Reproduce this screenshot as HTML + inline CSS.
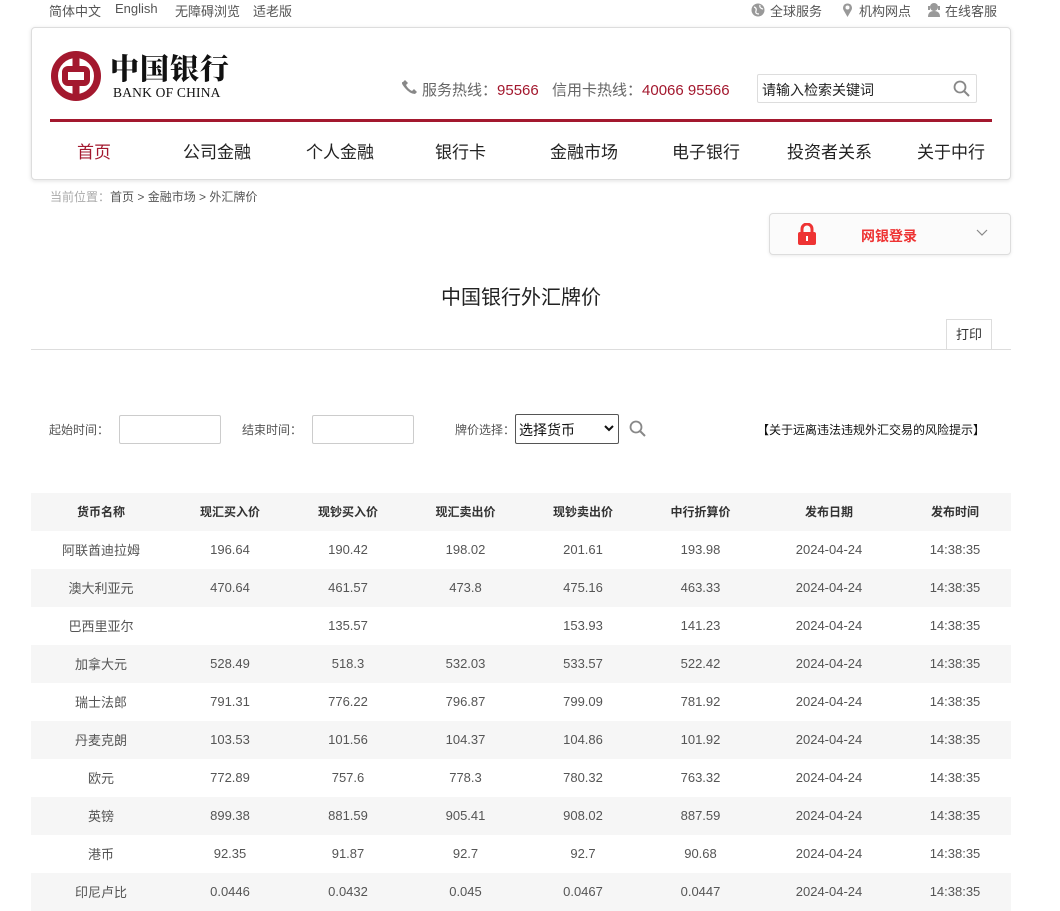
<!DOCTYPE html>
<html><head><meta charset="utf-8">
<style>
*{margin:0;padding:0;box-sizing:border-box}
body{width:1060px;height:904px;overflow:hidden;background:#fff;font-family:"Liberation Sans","Noto Sans CJK SC",sans-serif;color:#333;position:relative}
.a{position:absolute;white-space:nowrap}
.top{font-size:13px;color:#555;top:1px}
.hdr{position:absolute;left:31px;top:27px;width:980px;height:153px;border:1px solid #ddd;border-radius:4px;box-shadow:0 1px 4px rgba(0,0,0,.12);background:#fff}
.nav{font-size:17px;color:#222;top:138px}
table{position:absolute;left:31px;top:493px;width:980px;border-collapse:collapse;font-size:13px;color:#555}
td,th{height:38px;text-align:center;padding:0 0 2px 0}
th{font-weight:bold;color:#333;background:#f6f6f6;font-size:12px}
tr:nth-child(odd) td{background:#f6f6f6}
input.box{position:absolute;height:29px;border:1px solid #ccc;border-radius:2px;width:102px;top:415px}
.lbl{font-size:12px;color:#555;top:421px}
</style></head><body>
<div class="a top" style="left:49px">简体中文</div>
<div class="a top" style="left:115px">English</div>
<div class="a top" style="left:175px">无障碍浏览</div>
<div class="a top" style="left:253px">适老版</div>
<svg class="a" style="left:751px;top:3px" width="14" height="14" viewBox="0 0 14 14"><circle cx="7" cy="7" r="6.5" fill="#999"/><path d="M3 4q3 1 2 4t3 3M9 2q-1 3 3 4" stroke="#fff" stroke-width="1.2" fill="none"/></svg>
<div class="a top" style="left:770px">全球服务</div>
<svg class="a" style="left:842px;top:2px" width="11" height="16" viewBox="0 0 11 16"><path d="M5.5 15L1.5 8A4.5 4.5 0 1 1 9.5 8Z" fill="#999"/><circle cx="5.5" cy="5.5" r="2" fill="#fff"/></svg>
<div class="a top" style="left:859px">机构网点</div>
<svg class="a" style="left:927px;top:2px" width="14" height="16" viewBox="0 0 14 16"><circle cx="7" cy="5" r="4" fill="#999"/><path d="M1 15q0-6 6-6t6 6z" fill="#999"/><rect x="1" y="4" width="2" height="4" fill="#999"/><rect x="11" y="4" width="2" height="4" fill="#999"/></svg>
<div class="a top" style="left:945px">在线客服</div>

<div class="hdr"></div>
<svg class="a" style="left:50px;top:50px" width="52" height="52" viewBox="0 0 52 52"><circle cx="26" cy="26" r="21.5" fill="none" stroke="#a3182e" stroke-width="7"/><rect x="22.5" y="3" width="7" height="46" fill="#a3182e"/><rect x="15" y="19" width="22" height="14" rx="3" fill="none" stroke="#a3182e" stroke-width="6"/><rect x="22.5" y="22" width="7" height="8" fill="#fff"/></svg>
<div class="a" style="left:110px;top:47px;font-family:'Noto Serif CJK SC',serif;font-weight:900;font-size:29px;color:#111;letter-spacing:1px">中国银行</div>
<div class="a" style="left:113px;top:85px;font-family:'Liberation Serif',serif;font-size:13.5px;color:#111;letter-spacing:.2px">BANK OF CHINA</div>
<svg class="a" style="left:402px;top:79px" width="16" height="16" viewBox="0 0 16 16"><path d="M3 1l3 3-2 2q2 4 6 6l2-2 3 3-2 2Q8 15 3 9T1 3z" fill="#888"/></svg>
<div class="a" style="left:422px;top:79px;font-size:15px;color:#666">服务热线：<span style="color:#a3182e">95566</span></div>
<div class="a" style="left:552px;top:79px;font-size:15px;color:#666">信用卡热线：<span style="color:#a3182e">40066 95566</span></div>
<div class="a" style="left:757px;top:74px;width:220px;height:29px;border:1px solid #ddd;border-radius:2px"></div>
<div class="a" style="left:762px;top:80px;font-size:14px;color:#222">请输入检索关键词</div>
<svg class="a" style="left:953px;top:80px" width="17" height="17" viewBox="0 0 17 17"><circle cx="7" cy="7" r="5.5" fill="none" stroke="#888" stroke-width="1.8"/><path d="M11 11l5 5" stroke="#888" stroke-width="2"/></svg>
<div class="a" style="left:50px;top:119px;width:942px;height:3px;background:#a3182e"></div>
<div class="a nav" style="left:77px;color:#a3182e">首页</div>
<div class="a nav" style="left:183px">公司金融</div>
<div class="a nav" style="left:306px">个人金融</div>
<div class="a nav" style="left:435px">银行卡</div>
<div class="a nav" style="left:550px">金融市场</div>
<div class="a nav" style="left:672px">电子银行</div>
<div class="a nav" style="left:787px">投资者关系</div>
<div class="a nav" style="left:917px">关于中行</div>

<div class="a" style="left:50px;top:188px;font-size:12px;color:#aaa">当前位置：<span style="color:#555">首页 &gt; 金融市场 &gt; 外汇牌价</span></div>

<div class="a" style="left:769px;top:213px;width:242px;height:42px;border:1px solid #ddd;border-radius:4px;background:#fbfbfb;box-shadow:0 1px 3px rgba(0,0,0,.08)"></div>
<svg class="a" style="left:797px;top:223px" width="20" height="22" viewBox="0 0 20 22"><path d="M5 10V6a5 5 0 0 1 10 0v4" fill="none" stroke="#e33" stroke-width="3"/><rect x="1" y="9" width="18" height="13" rx="2" fill="#e33"/><rect x="9" y="13" width="2" height="5" fill="#fff"/></svg>
<div class="a" style="left:861px;top:226px;font-size:14px;color:#e33;font-weight:bold">网银登录</div>
<svg class="a" style="left:976px;top:229px" width="12" height="8" viewBox="0 0 12 8"><path d="M1 1l5 5 5-5" fill="none" stroke="#888" stroke-width="1.2"/></svg>

<div class="a" style="left:441px;top:281px;font-size:20px;color:#222">中国银行外汇牌价</div>
<div class="a" style="left:946px;top:319px;width:46px;height:31px;border:1px solid #ddd;border-bottom:none;background:#fff;font-size:13px;color:#333;text-align:center;line-height:29px">打印</div>
<div class="a" style="left:31px;top:349px;width:980px;height:1px;background:#ddd"></div>

<div class="a lbl" style="left:49px">起始时间：</div>
<input class="box" style="left:119px">
<div class="a lbl" style="left:242px">结束时间：</div>
<input class="box" style="left:312px">
<div class="a lbl" style="left:455px">牌价选择：</div>
<div class="a" style="left:515px;top:414px;width:104px;height:30px;border:1px solid #555;border-radius:2px;font-size:14px;color:#111;padding:5px 0 0 3px">选择货币</div>
<svg class="a" style="left:604px;top:425px" width="10" height="7" viewBox="0 0 10 7"><path d="M1 1l4 4 4-4" fill="none" stroke="#111" stroke-width="2"/></svg>
<svg class="a" style="left:629px;top:420px" width="17" height="17" viewBox="0 0 17 17"><circle cx="7" cy="7" r="5.5" fill="none" stroke="#888" stroke-width="1.8"/><path d="M11 11l5 5" stroke="#888" stroke-width="2"/></svg>
<div class="a" style="left:757px;top:421px;font-size:12px;color:#111">【关于远离违法违规外汇交易的风险提示】</div>

<table>
<colgroup><col style="width:140px"><col style="width:118px"><col style="width:118px"><col style="width:117px"><col style="width:118px"><col style="width:117px"><col style="width:140px"><col style="width:112px"></colgroup>
<tr><th>货币名称</th><th>现汇买入价</th><th>现钞买入价</th><th>现汇卖出价</th><th>现钞卖出价</th><th>中行折算价</th><th>发布日期</th><th>发布时间</th></tr>
<tr><td>阿联酋迪拉姆</td><td>196.64</td><td>190.42</td><td>198.02</td><td>201.61</td><td>193.98</td><td>2024-04-24</td><td>14:38:35</td></tr>
<tr><td>澳大利亚元</td><td>470.64</td><td>461.57</td><td>473.8</td><td>475.16</td><td>463.33</td><td>2024-04-24</td><td>14:38:35</td></tr>
<tr><td>巴西里亚尔</td><td></td><td>135.57</td><td></td><td>153.93</td><td>141.23</td><td>2024-04-24</td><td>14:38:35</td></tr>
<tr><td>加拿大元</td><td>528.49</td><td>518.3</td><td>532.03</td><td>533.57</td><td>522.42</td><td>2024-04-24</td><td>14:38:35</td></tr>
<tr><td>瑞士法郎</td><td>791.31</td><td>776.22</td><td>796.87</td><td>799.09</td><td>781.92</td><td>2024-04-24</td><td>14:38:35</td></tr>
<tr><td>丹麦克朗</td><td>103.53</td><td>101.56</td><td>104.37</td><td>104.86</td><td>101.92</td><td>2024-04-24</td><td>14:38:35</td></tr>
<tr><td>欧元</td><td>772.89</td><td>757.6</td><td>778.3</td><td>780.32</td><td>763.32</td><td>2024-04-24</td><td>14:38:35</td></tr>
<tr><td>英镑</td><td>899.38</td><td>881.59</td><td>905.41</td><td>908.02</td><td>887.59</td><td>2024-04-24</td><td>14:38:35</td></tr>
<tr><td>港币</td><td>92.35</td><td>91.87</td><td>92.7</td><td>92.7</td><td>90.68</td><td>2024-04-24</td><td>14:38:35</td></tr>
<tr><td>印尼卢比</td><td>0.0446</td><td>0.0432</td><td>0.045</td><td>0.0467</td><td>0.0447</td><td>2024-04-24</td><td>14:38:35</td></tr>
</table>
</body></html>
